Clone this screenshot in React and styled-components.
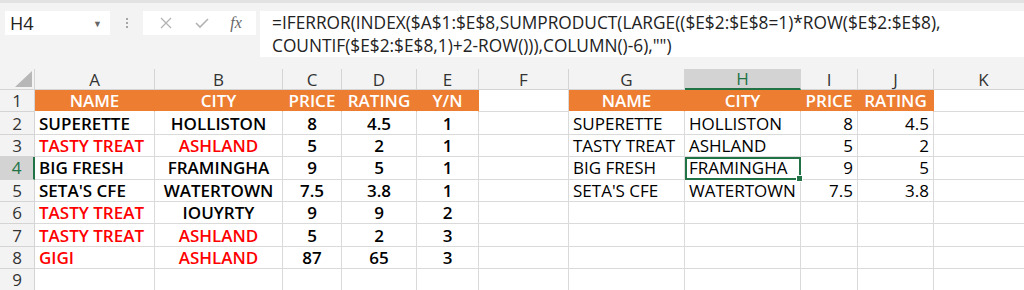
import React from 'react'
import styled, { createGlobalStyle, css } from 'styled-components'

const GlobalStyle = createGlobalStyle`
    html, body {
        margin: 0;
        padding: 0;
        background: #f3f3f3;
        overflow: hidden;
    }
    * { box-sizing: border-box; }
`

const Wrapper = styled.div`
    width: 1024px;
    height: 290px;
    font-family: 'Open Sans', 'Liberation Sans', sans-serif;
    font-size: 17px;
    color: #000;
    overflow: hidden;
    background: #f3f3f3;
    border-top: 3px solid #e2e2e2;
`

const FormulaBar = styled.div`
    display: flex;
    align-items: flex-start;
    height: 66px;
    padding: 8px 0 0 5px;
`

const NameBox = styled.div`
    width: 105px;
    height: 24px;
    background: #fff;
    display: flex;
    align-items: center;
    justify-content: space-between;
    padding: 0 8px 0 5px;
    color: #222;
    font-size: 18px;
    span { font-size: 9px; color: #666; }
`

const Dots = styled.div`
    width: 33px;
    height: 24px;
    display: flex;
    flex-direction: column;
    align-items: center;
    justify-content: center;
    gap: 2px;
    i {
        width: 2px;
        height: 2px;
        background: #a6a6a6;
    }
`

const FuncBox = styled.div`
    width: 113px;
    height: 24px;
    background: #fff;
    display: flex;
    align-items: center;
    justify-content: space-around;
    padding: 0 4px 0 6px;
    color: #b0b0b0;
`

const Fx = styled.span`
    font-family: 'Liberation Serif', serif;
    font-style: italic;
    color: #666;
    font-size: 16px;
`

const FormulaText = styled.div`
    flex: 1;
    margin-left: 4px;
    height: 46px;
    background: #fff;
    padding: 0 0 0 12px;
    line-height: 23px;
    font-size: 17.3px;
    color: #222;
    white-space: nowrap;
`

const Grid = styled.div`
    display: grid;
    grid-template-columns: 35px 120px 128px 59px 75px 62px 90px 116px 116px 57px 76px 100px;
    grid-auto-rows: 22.4px;
    grid-template-rows: 21px;
    background: #fff;
`

const ColHead = styled.div`
    background: ${p => (p.$active ? '#d3d3d3' : '#f3f3f3')};
    color: ${p => (p.$active ? '#217346' : '#333')};
    border-right: 1px solid #d4d4d4;
    border-bottom: ${p => (p.$active ? '2px solid #217346' : '1px solid #d4d4d4')};
    display: flex;
    align-items: center;
    justify-content: center;
    line-height: 1;
`

const Corner = styled.div`
    background: #f3f3f3;
    border-right: 1px solid #d4d4d4;
    border-bottom: 1px solid #d4d4d4;
    position: relative;
    &::after {
        content: '';
        position: absolute;
        right: 2px;
        bottom: 2px;
        border-style: solid;
        border-width: 0 0 16px 17px;
        border-color: transparent transparent #b7b7b7 transparent;
    }
`

const RowHead = styled.div`
    background: ${p => (p.$active ? '#d3d3d3' : '#f3f3f3')};
    color: ${p => (p.$active ? '#217346' : '#333')};
    border-right: ${p => (p.$active ? '2px solid #217346' : '1px solid #d4d4d4')};
    border-bottom: 1px solid #d4d4d4;
    display: flex;
    align-items: center;
    justify-content: center;
    line-height: 1;
`

const Cell = styled.div`
    position: relative;
    border-right: 1px solid #dadada;
    border-bottom: 1px solid #dadada;
    display: flex;
    align-items: center;
    padding: 0 4px;
    white-space: nowrap;
    overflow: visible;
    line-height: 1;
    justify-content: ${p => (p.$align === 'right' ? 'flex-end' : p.$align === 'center' ? 'center' : 'flex-start')};
    font-weight: ${p => (p.$bold ? 600 : 400)};
    color: ${p => (p.$red ? '#ff0000' : '#000')};
    ${p => p.$head && css`
        background: #ed7d31;
        color: #fff;
        font-weight: 600;
        border-right-color: #ed7d31;
        border-bottom-color: #fff;
        justify-content: center;
    `}
    ${p => p.$selected && css`
        outline: 2px solid #217346;
        outline-offset: -2px;
        z-index: 2;
        &::after {
            content: '';
            position: absolute;
            right: -3px;
            bottom: -3px;
            width: 5px;
            height: 5px;
            background: #217346;
            border: 1px solid #fff;
        }
    `}
`

const cols = ['A', 'B', 'C', 'D', 'E', 'F', 'G', 'H', 'I', 'J', 'K']

const left = [
    ['SUPERETTE', 'HOLLISTON', '8', '4.5', '1', false, false],
    ['TASTY TREAT', 'ASHLAND', '5', '2', '1', true, true],
    ['BIG FRESH', 'FRAMINGHA', '9', '5', '1', false, false],
    ["SETA'S CFE", 'WATERTOWN', '7.5', '3.8', '1', false, false],
    ['TASTY TREAT', 'IOUYRTY', '9', '9', '2', true, false],
    ['TASTY TREAT', 'ASHLAND', '5', '2', '3', true, true],
    ['GIGI', 'ASHLAND', '87', '65', '3', true, true],
]

const right = [
    ['SUPERETTE', 'HOLLISTON', '8', '4.5'],
    ['TASTY TREAT', 'ASHLAND', '5', '2'],
    ['BIG FRESH', 'FRAMINGHA', '9', '5'],
    ["SETA'S CFE", 'WATERTOWN', '7.5', '3.8'],
]

export default function App() {
    const rows = []
    // header row 1
    rows.push(
        <RowHead key="r1">1</RowHead>,
        ...['NAME', 'CITY', 'PRICE', 'RATING', 'Y/N'].map(t => <Cell key={'h' + t} $head>{t}</Cell>),
        <Cell key="hF" />,
        ...['NAME', 'CITY', 'PRICE', 'RATING'].map(t => <Cell key={'h2' + t} $head>{t}</Cell>),
        <Cell key="hK" />
    )
    for (let i = 0; i < 8; i++) {
        const n = i + 2
        const l = left[i]
        const r = right[i]
        rows.push(<RowHead key={'rh' + n} $active={n === 4}>{n}</RowHead>)
        if (l) {
            rows.push(
                <Cell key={n + 'A'} $bold $red={l[5]}>{l[0]}</Cell>,
                <Cell key={n + 'B'} $bold $red={l[6]} $align="center">{l[1]}</Cell>,
                <Cell key={n + 'C'} $bold $align="center">{l[2]}</Cell>,
                <Cell key={n + 'D'} $bold $align="center">{l[3]}</Cell>,
                <Cell key={n + 'E'} $bold $align="center">{l[4]}</Cell>
            )
        } else {
            ['A', 'B', 'C', 'D', 'E'].forEach(c => rows.push(<Cell key={n + c} />))
        }
        rows.push(<Cell key={n + 'F'} />)
        if (r) {
            rows.push(
                <Cell key={n + 'G'}>{r[0]}</Cell>,
                <Cell key={n + 'H'} $selected={n === 4}>{r[1]}</Cell>,
                <Cell key={n + 'I'} $align="right">{r[2]}</Cell>,
                <Cell key={n + 'J'} $align="right">{r[3]}</Cell>
            )
        } else {
            ['G', 'H', 'I', 'J'].forEach(c => rows.push(<Cell key={n + c} />))
        }
        rows.push(<Cell key={n + 'K'} />)
    }

    return (
        <Wrapper>
            <GlobalStyle />
            <FormulaBar>
                <NameBox>H4<span>▼</span></NameBox>
                <Dots><i /><i /><i /></Dots>
                <FuncBox>
                    <svg width="14" height="14" viewBox="0 0 14 14">
                        <path d="M2 2 L12 12 M12 2 L2 12" stroke="#b3b3b3" strokeWidth="1.3" fill="none" />
                    </svg>
                    <svg width="16" height="14" viewBox="0 0 16 14">
                        <path d="M2 7 L6 11 L14 3" stroke="#b3b3b3" strokeWidth="1.6" fill="none" />
                    </svg>
                    <Fx>fx</Fx>
                </FuncBox>
                <FormulaText>
                    =IFERROR(INDEX($A$1:$E$8,SUMPRODUCT(LARGE(($E$2:$E$8=1)*ROW($E$2:$E$8),
                    <br />
                    COUNTIF($E$2:$E$8,1)+2-ROW())),COLUMN()-6),"")
                </FormulaText>
            </FormulaBar>
            <Grid>
                <Corner />
                {cols.map(c => <ColHead key={c} $active={c === 'H'}>{c}</ColHead>)}
                {rows}
            </Grid>
        </Wrapper>
    )
}
